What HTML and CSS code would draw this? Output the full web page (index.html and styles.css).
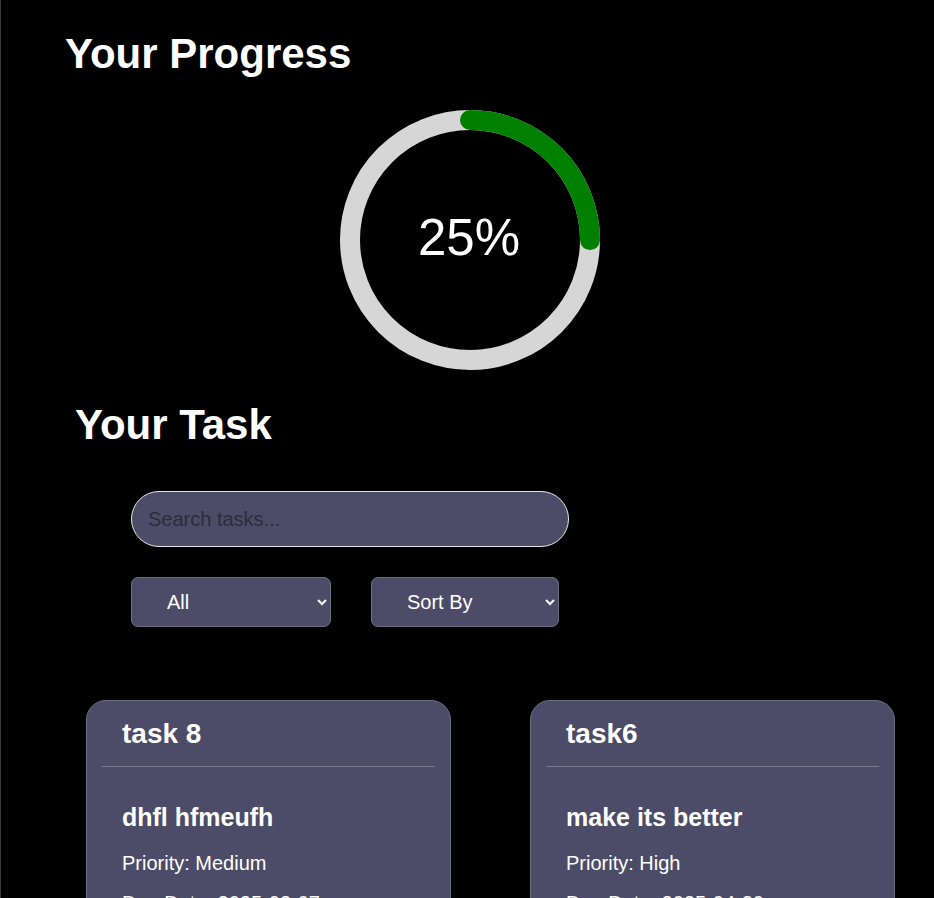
FILE: index.html
```html
<!DOCTYPE html>
<html lang="en">
<head>
<meta charset="utf-8">
<title>Dashboard</title>
<link rel="stylesheet" href="styles.css">
</head>
<body>
<main class="page">
  <section class="progress">
    <h1 class="progress-title">Your Progress</h1>
    <div class="ring-wrap">
      <div class="ring">
        <svg width="260" height="260" viewBox="0 0 260 260">
          <circle cx="130" cy="130" r="120" fill="none" stroke="#d6d6d6" stroke-width="20"/>
          <circle cx="130" cy="130" r="120" fill="none" stroke="#008000" stroke-width="20"
            stroke-linecap="round" stroke-dasharray="188.5 565.5" transform="rotate(-90 130 130)"/>
        </svg>
        <span class="ring-label">25%</span>
      </div>
    </div>
  </section>

  <section class="tasks">
    <h2 class="tasks-title">Your Task</h2>
    <div class="controls">
      <input class="search" type="text" placeholder="Search tasks...">
      <div class="filters">
        <select class="select select-all">
          <option>All</option>
        </select>
        <select class="select select-sort">
          <option>Sort By</option>
        </select>
      </div>
    </div>

    <div class="cards">
      <article class="card">
        <div class="card-head"><h3 class="card-title">task 8</h3></div>
        <div class="card-body">
          <h4 class="card-desc">dhfl hfmeufh</h4>
          <p class="card-line">Priority: Medium</p>
          <p class="card-line">Due Date: 2025-03-07</p>
        </div>
      </article>
      <article class="card">
        <div class="card-head"><h3 class="card-title">task6</h3></div>
        <div class="card-body">
          <h4 class="card-desc">make its better</h4>
          <p class="card-line">Priority: High</p>
          <p class="card-line">Due Date: 2025-04-30</p>
        </div>
      </article>
    </div>
  </section>
</main>
</body>
</html>
```

FILE: styles.css
```css
* { box-sizing: border-box; }

html, body {
  margin: 0;
  padding: 0;
  background: #000;
  color: #fff;
  font-family: "Liberation Sans", Arial, sans-serif;
}

.page {
  min-height: 898px;
  border-left: 1px solid #3a3a3a;
  overflow: hidden;
}

.progress-title {
  margin: 30px 0 0 64px;
  font-size: 42px;
  line-height: 48px;
  font-weight: 700;
}

.ring-wrap {
  display: flex;
  justify-content: center;
  padding-left: 5px;
  margin-top: 32px;
}

.ring {
  position: relative;
  width: 260px;
  height: 260px;
}

.ring svg { display: block; }

.ring-label {
  position: absolute;
  inset: 0;
  display: flex;
  align-items: center;
  justify-content: center;
  font-size: 51px;
  padding-bottom: 6px;
  padding-right: 2px;
}

.tasks-title {
  margin: 31px 0 0 74px;
  font-size: 42px;
  line-height: 48px;
  font-weight: 700;
}

.controls {
  margin: 42px 0 0 130px;
  display: flex;
  flex-direction: column;
  gap: 30px;
}

.search {
  width: 438px;
  height: 56px;
  border-radius: 28px;
  border: 1px solid #e6e6e6;
  background: #4c4c68;
  padding: 0 16px;
  font-family: inherit;
  font-size: 20px;
  color: #fff;
  outline: none;
}

.search::placeholder { color: #2c2c3c; }

.filters {
  display: flex;
  gap: 40px;
}

.select {
  height: 50px;
  border: 1px solid #6e6e80;
  border-radius: 7px;
  background: #4c4c68;
  color: #fff;
  font-family: inherit;
  font-size: 20px;
  padding: 0 11px 0 31px;
}

.select-all { width: 200px; }
.select-sort { width: 188px; }

.cards {
  display: flex;
  gap: 79px;
  margin: 73px 0 0 85px;
}

.card {
  width: 365px;
  height: 300px;
  background: #4c4c68;
  border: 1px solid #6e6e82;
  border-radius: 20px;
  padding-top: 17px;
}

.card-head {
  margin: 0 15px;
  padding: 0 0 16px 20px;
  border-bottom: 1px solid #7a7a8c;
}

.card-title {
  margin: 0;
  font-size: 28px;
  line-height: 32px;
  font-weight: 700;
}

.card-body {
  padding: 35px 0 0 35px;
}

.card-desc {
  margin: 0;
  font-size: 25px;
  line-height: 30px;
  font-weight: 700;
}

.card-line {
  margin: 19px 0 0;
  font-size: 20px;
  line-height: 24px;
}

.card-line + .card-line { margin-top: 16px; }
```
